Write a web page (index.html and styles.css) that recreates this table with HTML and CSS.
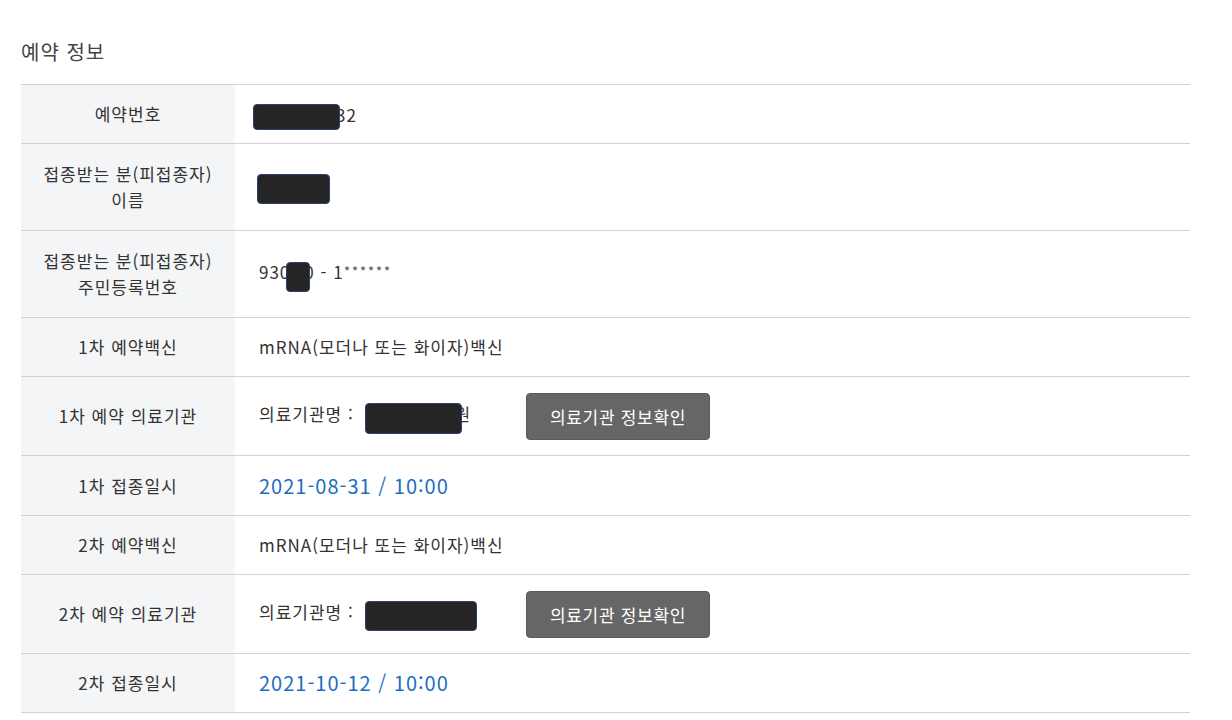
FILE: index.html
```html
<!DOCTYPE html>
<html lang="ko">
<head>
<meta charset="utf-8">
<link rel="stylesheet" href="styles.css">
</head>
<body>
<div class="wrap">
  <h2 class="title">예약 정보</h2>
  <table class="info">
    <tr class="r59">
      <th>예약번호</th>
      <td><span class="mask m1"></span><span class="after">32</span></td>
    </tr>
    <tr class="r87">
      <th>접종받는 분(피접종자)<br>이름</th>
      <td><span class="mask m2"></span></td>
    </tr>
    <tr class="r87">
      <th>접종받는 분(피접종자)<br>주민등록번호</th>
      <td class="ssn">930<span class="mask m3"></span>0 - 1<span class="stars">******</span></td>
    </tr>
    <tr class="r59">
      <th>1차 예약백신</th>
      <td>mRNA(모더나 또는 화이자)백신</td>
    </tr>
    <tr class="r79">
      <th>1차 예약 의료기관</th>
      <td><div class="org"><span class="orgname">의료기관명 : <span class="mask m4"></span>원</span><button class="btn">의료기관 정보확인</button></div></td>
    </tr>
    <tr class="r60">
      <th>1차 접종일시</th>
      <td class="date">2021-08-31 / 10:00</td>
    </tr>
    <tr class="r59">
      <th>2차 예약백신</th>
      <td>mRNA(모더나 또는 화이자)백신</td>
    </tr>
    <tr class="r79">
      <th>2차 예약 의료기관</th>
      <td><div class="org"><span class="orgname">의료기관명 : <span class="mask m5"></span></span><button class="btn">의료기관 정보확인</button></div></td>
    </tr>
    <tr class="r59">
      <th>2차 접종일시</th>
      <td class="date">2021-10-12 / 10:00</td>
    </tr>
  </table>
</div>
</body>
</html>
```
FILE: styles.css
```css
* { box-sizing: border-box; }
html, body { margin: 0; padding: 0; background: #fff; }
body {
  font-family: "Noto Sans CJK KR", "Noto Sans", sans-serif;
  color: #333;
}
.wrap {
  padding: 0 42px 0 21px;
}
.title {
  margin: 0;
  padding-top: 37px;
  height: 84px;
  font-size: 20px;
  font-weight: 400;
  line-height: 30px;
  letter-spacing: 1px;
  color: #444;
}
.info {
  width: 100%;
  border-collapse: collapse;
  border-top: 1px solid #d2d2d7;
}
.info tr { border-bottom: 1px solid #d2d2d7; }
.info tr.r59 { height: 59px; }
.info tr.r60 { height: 60px; }
.info tr.r79 { height: 79px; }
.info tr.r87 { height: 87px; }
.info th {
  width: 214px;
  background: #f4f5f7;
  font-weight: 400;
  font-size: 17px;
  line-height: 26px;
  letter-spacing: 1px;
  padding: 0 8px;
  text-align: center;
  vertical-align: middle;
  color: #333;
}
.info td {
  font-size: 17px;
  line-height: 26px;
  letter-spacing: 1px;
  padding: 0 24px;
  text-align: left;
  vertical-align: middle;
  color: #333;
}
.info td.date {
  font-size: 20px;
  line-height: 28px;
  letter-spacing: 1px;
  color: #1b6ec2;
}
.mask {
  display: inline-block;
  vertical-align: middle;
  position: relative;
  top: 2px;
  background: #252525;
  border: 1px solid #2c4372;
  border-radius: 4px;
}
.m1 { width: 87px; height: 26px; margin-left: -6px; margin-right: -4px; }
.m2 { width: 73px; height: 30px; margin-left: -2px; }
.m3 { width: 24px; height: 30px; margin-left: -4px; margin-right: -6px; }
.m4 { width: 97px; height: 31px; margin-left: 6px; margin-right: -8px; }
.m5 { width: 112px; height: 30px; margin-left: 6px; }
.after { vertical-align: middle; }
.ssn { padding-top: 2px; }
.ssn .stars { font-size: 14px; color: #555; vertical-align: 2px; letter-spacing: 1.5px; }
.org { display: flex; align-items: center; }
.orgname { width: 267px; white-space: nowrap; }
.btn {
  width: 184px;
  height: 47px;
  background: #666;
  color: #fff;
  border: 1px solid #5a5a5a;
  border-radius: 4px;
  font-family: "Noto Sans CJK KR", "Noto Sans", sans-serif;
  font-size: 17px;
  letter-spacing: 0.7px;
  padding: 0;
}
```
